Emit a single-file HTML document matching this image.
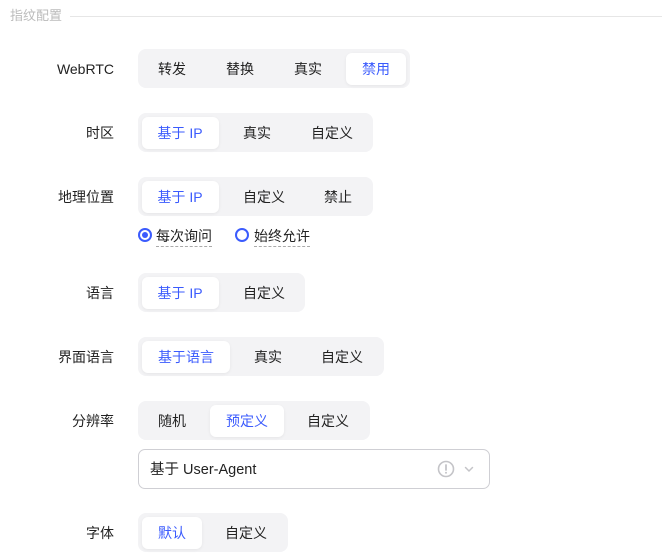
<!DOCTYPE html>
<html><head><meta charset="utf-8"><style>
*{margin:0;padding:0;box-sizing:border-box}
body{width:662px;height:555px;background:#fff;position:relative;overflow:hidden;font-family:"Liberation Sans","Noto Sans CJK SC",sans-serif;font-size:14px;color:#222}
.a{position:absolute}
.lbl{position:absolute;right:548px;white-space:nowrap;line-height:20px}
.g{position:absolute;background:#f3f3f5;border-radius:8px;height:39px}
.s{position:absolute;background:#fff;border-radius:6px;height:32px;box-shadow:0 1px 3px rgba(0,0,0,.06)}
.t{position:absolute;transform:translateX(-50%);white-space:nowrap;line-height:20px}
.b{color:#3b5bfd}
</style></head><body>
<div class="a" style="left:10px;top:7px;color:#bbb;font-size:13px;line-height:18px">指纹配置</div>
<div class="a" style="left:70px;top:16px;width:592px;height:1px;background:#e6e6e6"></div>

<div class="lbl" style="top:59px">WebRTC</div>
<div class="g" style="left:138px;top:49px;width:272px"></div>
<div class="s" style="left:346px;top:53px;width:60px"></div>
<div class="t" style="left:172px;top:59px">转发</div>
<div class="t" style="left:240px;top:59px">替换</div>
<div class="t" style="left:308px;top:59px">真实</div>
<div class="t b" style="left:376px;top:59px">禁用</div>

<div class="lbl" style="top:123px">时区</div>
<div class="g" style="left:138px;top:113px;width:235px"></div>
<div class="s" style="left:142px;top:117px;width:77px"></div>
<div class="t b" style="left:180px;top:123px">基于 IP</div>
<div class="t" style="left:257px;top:123px">真实</div>
<div class="t" style="left:332px;top:123px">自定义</div>

<div class="lbl" style="top:187px">地理位置</div>
<div class="g" style="left:138px;top:177px;width:235px"></div>
<div class="s" style="left:142px;top:181px;width:77px"></div>
<div class="t b" style="left:180px;top:187px">基于 IP</div>
<div class="t" style="left:264px;top:187px">自定义</div>
<div class="t" style="left:338px;top:187px">禁止</div>

<div class="a" style="left:138px;top:228px;width:14px;height:14px;border:2px solid #3b5bfd;border-radius:50%"></div>
<div class="a" style="left:142px;top:232px;width:6px;height:6px;background:#3b5bfd;border-radius:50%"></div>
<div class="a" style="left:156px;top:226px;line-height:20px;border-bottom:1px dashed #aaa">每次询问</div>
<div class="a" style="left:235px;top:228px;width:14px;height:14px;border:2px solid #3b5bfd;border-radius:50%"></div>
<div class="a" style="left:254px;top:226px;line-height:20px;border-bottom:1px dashed #aaa">始终允许</div>

<div class="lbl" style="top:283px">语言</div>
<div class="g" style="left:138px;top:273px;width:167px"></div>
<div class="s" style="left:142px;top:277px;width:77px"></div>
<div class="t b" style="left:180px;top:283px">基于 IP</div>
<div class="t" style="left:264px;top:283px">自定义</div>

<div class="lbl" style="top:347px">界面语言</div>
<div class="g" style="left:138px;top:337px;width:246px"></div>
<div class="s" style="left:142px;top:341px;width:88px"></div>
<div class="t b" style="left:186px;top:347px">基于语言</div>
<div class="t" style="left:268px;top:347px">真实</div>
<div class="t" style="left:342px;top:347px">自定义</div>

<div class="lbl" style="top:411px">分辨率</div>
<div class="g" style="left:138px;top:401px;width:232px"></div>
<div class="s" style="left:210px;top:405px;width:74px"></div>
<div class="t" style="left:172px;top:411px">随机</div>
<div class="t b" style="left:247px;top:411px">预定义</div>
<div class="t" style="left:328px;top:411px">自定义</div>

<div class="a" style="left:138px;top:449px;width:352px;height:40px;border:1px solid #cfcfd4;border-radius:7px"></div>
<div class="a" style="left:150px;top:460px;line-height:20px;font-size:14.5px">基于 User-Agent</div>
<svg class="a" style="left:437px;top:460px" width="18" height="18" viewBox="0 0 18 18"><circle cx="9" cy="9" r="7.5" fill="none" stroke="#c4c4c8" stroke-width="1.6"/><path d="M9 5v5" stroke="#c4c4c8" stroke-width="1.8" stroke-linecap="round"/><circle cx="9" cy="12.8" r="1" fill="#c4c4c8"/></svg>
<svg class="a" style="left:463px;top:463px" width="12" height="12" viewBox="0 0 12 12"><path d="M2.5 4.5L6 8l3.5-3.5" fill="none" stroke="#c4c4c8" stroke-width="1.5" stroke-linecap="round"/></svg>

<div class="lbl" style="top:523px">字体</div>
<div class="g" style="left:138px;top:513px;width:150px"></div>
<div class="s" style="left:142px;top:517px;width:60px"></div>
<div class="t b" style="left:172px;top:523px">默认</div>
<div class="t" style="left:246px;top:523px">自定义</div>
</body></html>
